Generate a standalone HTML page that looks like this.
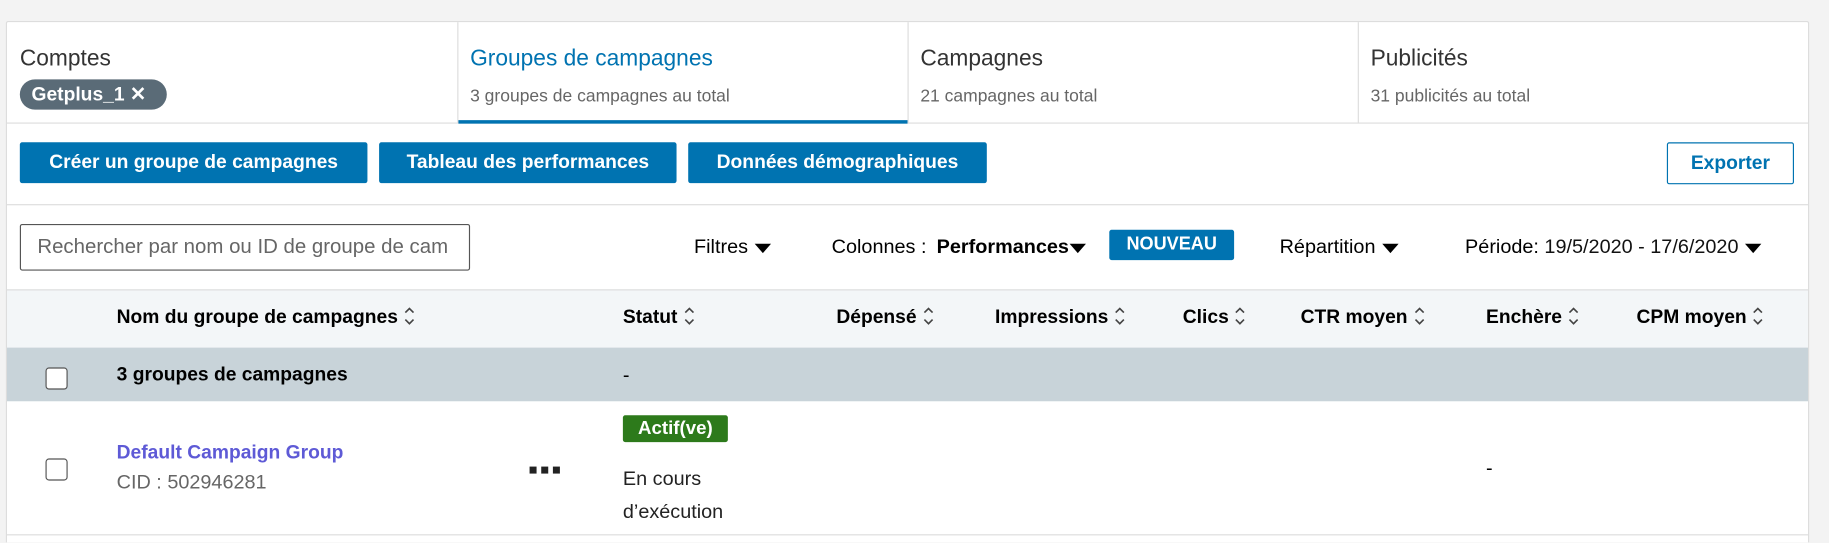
<!DOCTYPE html>
<html><head><meta charset="utf-8"><style>
*{box-sizing:border-box;margin:0;padding:0}
html,body{width:1829px;height:543px;overflow:hidden}
body{background:#f3f3f3;font-family:"Liberation Sans",sans-serif;color:#000;position:relative}
#w{position:absolute;left:0;top:0;width:1568px;height:465px;overflow:hidden;transform:scale(1.16645);transform-origin:0 0}
.card{position:absolute;left:5px;top:18px;width:1546px;height:460px;background:#fff;border:1px solid #ddd;border-radius:2px}
.a{position:absolute;white-space:nowrap}
.t1{font-size:19.5px;color:#333}
.t2{font-size:15px;color:#666}
.btn{position:absolute;height:35px;background:#0073b1;color:#fff;font-weight:bold;font-size:16.5px;border-radius:2px;text-align:center;line-height:35px}
.sort{display:inline-block;vertical-align:middle;margin-left:5px;margin-top:-3px}
.hd{font-size:16.5px;color:#000;font-weight:bold;top:263px}
.tri{display:inline-block;width:0;height:0;border-left:7px solid transparent;border-right:7px solid transparent;border-top:8px solid #000;vertical-align:middle;margin-left:6px}
.cb{position:absolute;width:19px;height:19px;border:1.5px solid #555;border-radius:3px;background:#fff}
.f{font-size:17px}
.dot{position:absolute;top:400px;width:6px;height:6px;background:#222}
</style></head><body><div id="w">
<div class="card">
 <div style="position:absolute;left:386px;top:0;height:86px;border-left:1px solid #ddd"></div>
 <div style="position:absolute;left:772px;top:0;height:86px;border-left:1px solid #ddd"></div>
 <div style="position:absolute;left:1158px;top:0;height:86px;border-left:1px solid #ddd"></div>
 <div style="position:absolute;left:0;top:86px;width:1544px;border-top:1px solid #ddd"></div>
 <div style="position:absolute;left:387px;top:84px;width:385px;height:3px;background:#0073b1"></div>
 <div style="position:absolute;left:0;top:156px;width:1544px;border-top:1px solid #ddd"></div>
</div>
<div class="a t1" style="left:17px;top:39px">Comptes</div>
<div class="a" style="left:17px;top:68px;width:126px;height:26px;background:#5a6b77;border-radius:13px;color:#fff;font-size:16.5px;font-weight:bold;line-height:26px;padding-left:10px">Getplus_1 ✕</div>
<div class="a t1" style="left:403px;top:39px;color:#0073b1">Groupes de campagnes</div>
<div class="a t2" style="left:403px;top:74px">3 groupes de campagnes au total</div>
<div class="a t1" style="left:789px;top:39px">Campagnes</div>
<div class="a t2" style="left:789px;top:74px">21 campagnes au total</div>
<div class="a t1" style="left:1175px;top:39px">Publicités</div>
<div class="a t2" style="left:1175px;top:74px">31 publicités au total</div>

<div class="btn" style="left:17px;top:122px;width:298px">Créer un groupe de campagnes</div>
<div class="btn" style="left:325px;top:122px;width:255px">Tableau des performances</div>
<div class="btn" style="left:590px;top:122px;width:256px">Données démographiques</div>
<div class="a" style="left:1429px;top:122px;width:109px;height:36px;border:1px solid #0073b1;color:#0073b1;font-size:16.5px;font-weight:bold;text-align:center;line-height:34px;border-radius:2px">Exporter</div>

<div class="a" style="left:17px;top:192px;width:386px;height:40px;border:1.5px solid #555;border-radius:2px;font-size:17.5px;color:#666;line-height:37px;padding-left:14px;overflow:hidden">Rechercher par nom ou ID de groupe de cam</div>
<div class="a f" style="left:595px;top:202px">Filtres<span class="tri"></span></div>
<div class="a f" style="left:713px;top:202px">Colonnes : <b style="margin-left:4px">Performances</b><span class="tri" style="margin-left:1px"></span></div>
<div class="a" style="left:951px;top:197px;width:107px;height:26px;background:#0073b1;color:#fff;font-weight:bold;font-size:15.5px;text-align:center;line-height:26px;border-radius:2px">NOUVEAU</div>
<div class="a f" style="left:1097px;top:202px">Répartition<span class="tri"></span></div>
<div class="a f" style="left:1256px;top:202px">Période: <b style="font-weight:normal;color:#111">19/5/2020 - 17/6/2020</b><span class="tri"></span></div>

<div class="a" style="left:6px;top:248px;width:1544px;height:50px;background:#f3f6f8;border-top:1px solid #ddd"></div>
<div class="a" style="left:6px;top:298px;width:1544px;height:46px;background:#c8d3d9"></div>
<div class="a" style="left:6px;top:458px;width:1544px;border-top:1px solid #ddd"></div>

<svg width="0" height="0" style="position:absolute"><defs><symbol id="s" viewBox="0 0 10 18"><path d="M1.5 6 5 2.5 8.5 6M1.5 12 5 15.5 8.5 12" fill="none" stroke="#444" stroke-width="1.4"/></symbol></defs></svg>
<div class="a hd" style="left:100px">Nom du groupe de campagnes<svg class="sort" width="10" height="18"><use href="#s"/></svg></div>
<div class="a hd" style="left:534px">Statut<svg class="sort" width="10" height="18"><use href="#s"/></svg></div>
<div class="a hd" style="left:717px">Dépensé<svg class="sort" width="10" height="18"><use href="#s"/></svg></div>
<div class="a hd" style="left:853px">Impressions<svg class="sort" width="10" height="18"><use href="#s"/></svg></div>
<div class="a hd" style="left:1014px">Clics<svg class="sort" width="10" height="18"><use href="#s"/></svg></div>
<div class="a hd" style="left:1115px">CTR moyen<svg class="sort" width="10" height="18"><use href="#s"/></svg></div>
<div class="a hd" style="left:1274px">Enchère<svg class="sort" width="10" height="18"><use href="#s"/></svg></div>
<div class="a hd" style="left:1403px">CPM moyen<svg class="sort" width="10" height="18"><use href="#s"/></svg></div>

<div class="cb" style="left:39px;top:315px"></div>
<div class="a" style="left:100px;top:312px;font-size:16.5px;font-weight:bold">3 groupes de campagnes</div>
<div class="a f" style="left:534px;top:312px">-</div>

<div class="cb" style="left:39px;top:393px"></div>
<div class="a" style="left:100px;top:379px;font-size:16.5px;color:#5e5ad6;font-weight:bold">Default Campaign Group</div>
<div class="a f" style="left:100px;top:404px;color:#666">CID : 502946281</div>
<div class="dot" style="left:454px"></div><div class="dot" style="left:464px"></div><div class="dot" style="left:474px"></div>
<div class="a" style="left:534px;top:356px;width:90px;height:23px;background:#2d7a1b;color:#fff;font-weight:bold;font-size:16px;text-align:center;line-height:23px;border-radius:2px">Actif(ve)</div>
<div class="a f" style="left:534px;top:397px;line-height:28px;color:#222">En cours<br>d’exécution</div>
<div class="a f" style="left:1274px;top:392px">-</div>
</div></body></html>
